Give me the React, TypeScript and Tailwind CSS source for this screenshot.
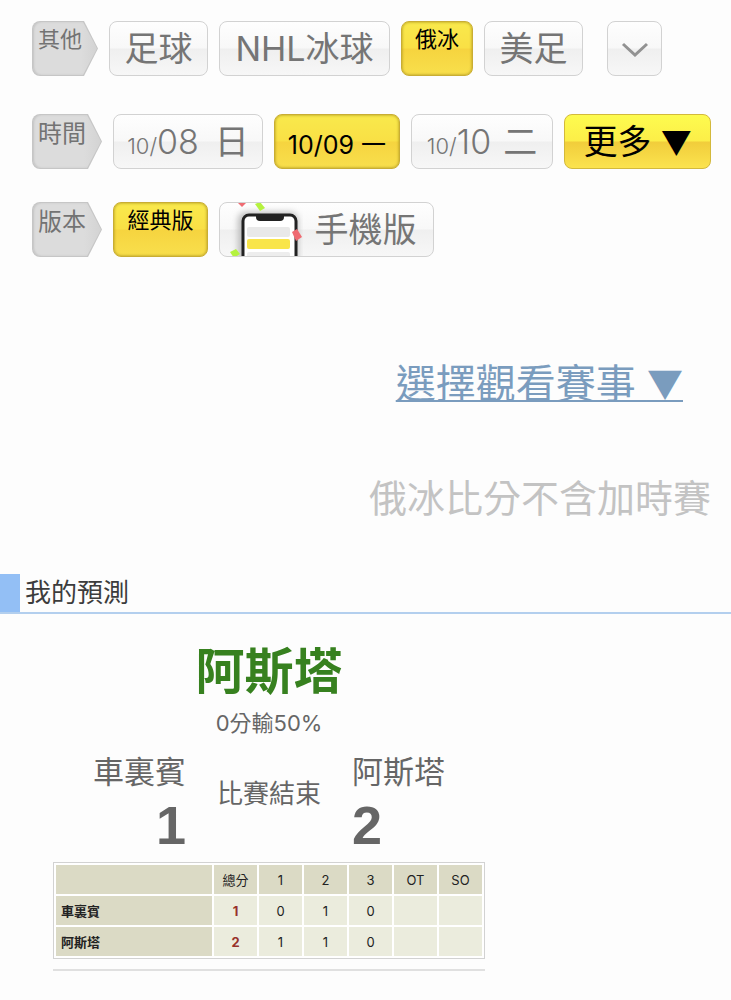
import React, { useState } from 'react';
import clsx from 'clsx';

const BUTTON_BASE =
  'flex h-[55px] shrink-0 justify-center overflow-hidden rounded-lg border';
const BUTTON_PLAIN =
  'items-center border-[#d2d2d2] bg-[linear-gradient(#fefefe,#f8f8f8_49%,#efefef_51%,#f7f7f7)] text-[34px] text-[#757575]';
const BUTTON_ACTIVE =
  'border-[#c9ad34] bg-[linear-gradient(#f9e94c,#f9e045_49%,#f6d43f_51%,#f8df4c)] text-black shadow-[inset_0_0_3px_#a8901c]';

const periods = ['1', '2', '3', 'OT', 'SO'];

const scores = [
  { team: '車裏賓', total: 1, periods: ['0', '1', '0', '', ''] },
  { team: '阿斯塔', total: 2, periods: ['1', '1', '0', '', ''] },
];

type TagProps = { label: string; className: string };

// Grey arrow-shaped label in front of each filter row
const Tag = ({ label, className }: TagProps) => (
  <div
    className={clsx(
      'h-[55px] shrink-0 rounded-l-lg bg-[#c6c6c6] p-px [clip-path:polygon(0_0,calc(100%-14px)_0,100%_50%,calc(100%-14px)_100%,0_100%)]',
      className,
    )}
  >
    <div className="h-full rounded-l-lg bg-[linear-gradient(90deg,#dcdcdc_75%,#d3d3d3)] pl-[5px] text-[#737373] shadow-[inset_1px_0_2px_#c4c4c4] [clip-path:polygon(0_0,calc(100%-14px)_0,100%_50%,calc(100%-14px)_100%,0_100%)]">
      {label}
    </div>
  </div>
);

type FilterButtonProps = {
  active?: boolean;
  className: string;
  onClick?: () => void;
  children: React.ReactNode;
};

const FilterButton = ({
  active,
  className,
  onClick,
  children,
}: FilterButtonProps) => (
  <button
    type="button"
    aria-pressed={active}
    onClick={onClick}
    className={clsx(
      BUTTON_BASE,
      active ? BUTTON_ACTIVE : BUTTON_PLAIN,
      className,
    )}
  >
    {children}
  </button>
);

const PhoneIcon = () => (
  <svg width="82" height="53" viewBox="0 0 82 53" aria-hidden="true">
    <defs>
      <filter id="phoneShadow" x="-20%" y="-20%" width="140%" height="140%">
        <feGaussianBlur stdDeviation="3" />
      </filter>
    </defs>
    <rect x="17" y="9" width="60" height="60" rx="8" fill="#bbb" filter="url(#phoneShadow)" />
    <rect x="22" y="12" width="53" height="70" rx="6" fill="#fff" stroke="#222" strokeWidth="3" />
    <path d="M35 11h28v3q0 4-4 4H39q-4 0-4-4z" fill="#222" />
    <rect x="26" y="24" width="43" height="10" rx="2" fill="#e9e9e9" />
    <rect x="26" y="36" width="43" height="10" rx="2" fill="#f9e54a" />
    <rect x="26" y="49" width="43" height="10" rx="2" fill="#ededed" />
    <path d="M17 0h8l-4 4z" fill="#ef6b72" />
    <path d="M34 1l5-2 5 6-5 3z" fill="#b5f23f" />
    <path d="M71 29l5-3 5 8-6 4z" fill="#ef6b72" />
    <path d="M9 49l6-3 4 5-6 4z" fill="#b5f23f" />
  </svg>
);

// Drop-down marker
const Marker = () => (
  <span className="font-['Noto_Sans_CJK_TC'] text-[0.9em]">▼</span>
);

const App = () => {
  const [sport, setSport] = useState('俄冰');
  const [date, setDate] = useState('10/09');

  return (
    <main className="min-h-screen overflow-hidden bg-[#fdfdfd] pt-[21px] font-['Inter','Noto_Sans_CJK_TC',sans-serif]">
      {/* Filters */}
      <div className="pl-8">
        <div className="flex gap-[11px]">
          <Tag label="其他" className="w-[66px] text-[22px] leading-[34px]" />
          <FilterButton className="w-[99px]" onClick={() => setSport('足球')}>
            足球
          </FilterButton>
          <FilterButton className="w-[171px]" onClick={() => setSport('NHL')}>
            NHL冰球
          </FilterButton>
          <FilterButton
            active={sport === '俄冰'}
            className="w-[72px] text-[22px] leading-[34px]"
            onClick={() => setSport('俄冰')}
          >
            俄冰
          </FilterButton>
          <FilterButton className="w-[99px]" onClick={() => setSport('美足')}>
            美足
          </FilterButton>
          <button
            type="button"
            aria-label="展開"
            className={clsx(BUTTON_BASE, BUTTON_PLAIN, 'ml-[13px] w-[55px]')}
          >
            <svg width="28" height="16" viewBox="0 0 28 16" fill="none" aria-hidden="true">
              <path d="M2 3l12 11L26 3" stroke="#929292" strokeWidth="3" />
            </svg>
          </button>
        </div>

        <div className="mt-[38px] flex gap-[11px]">
          <Tag label="時間" className="w-[70px] text-[24px] leading-[38px]" />
          <FilterButton className="w-[150px]" onClick={() => setDate('10/08')}>
            <span>
              <span className="font-light">
                <span className="text-[22px]">10/</span>08
              </span>
              <span className="ml-4">日</span>
            </span>
          </FilterButton>
          <FilterButton
            active={date === '10/09'}
            className="w-[126px] items-center pt-2 text-[25px]"
            onClick={() => setDate('10/09')}
          >
            10/09 一
          </FilterButton>
          <FilterButton className="w-[142px]" onClick={() => setDate('10/10')}>
            <span>
              <span className="font-light">
                <span className="text-[22px]">10/</span>10
              </span>
              <span className="ml-3">二</span>
            </span>
          </FilterButton>
          <button
            type="button"
            className={clsx(
              BUTTON_BASE,
              'w-[147px] items-center border-[#d3b93c] bg-[linear-gradient(#fdfb4f,#fcee48_49%,#f1cd3b_51%,#fbe34e)] text-[34px] text-black',
            )}
          >
            <span>
              更多 <Marker />
            </span>
          </button>
        </div>

        <div className="mt-[33px] flex gap-[11px]">
          <Tag label="版本" className="w-[70px] text-[24px] leading-[38px]" />
          <FilterButton active className="w-[95px] text-[22px] leading-[34px]">
            經典版
          </FilterButton>
          <FilterButton className="w-[215px] gap-3 pr-4">
            <PhoneIcon />
            手機版
          </FilterButton>
        </div>
      </div>

      <div className="mt-[97px] pr-12 text-right text-[40px] leading-[56px]">
        <a
          href="#games"
          className="text-[#7a9cbe] underline decoration-2 underline-offset-2 [text-decoration-skip-ink:none]"
        >
          選擇觀看賽事 <Marker />
        </a>
      </div>
      <p className="mt-[58px] pr-5 text-right text-[38px] leading-[56px] text-[#c3c3c3]">
        俄冰比分不含加時賽
      </p>

      {/* My predictions */}
      <h2 className="mt-12 border-b-2 border-[#b3cfee] text-[26px] leading-[38px] text-[#3c3c3c]">
        <span className="block border-l-[20px] border-[#93bff5] pl-[5px]">
          我的預測
        </span>
      </h2>

      <section id="games" className="ml-[53px] max-w-[432px] text-[#666]">
        <p className="pt-7 text-center text-[49px] leading-[60px] font-bold text-[#37811f]">
          阿斯塔
        </p>
        <p className="mt-1 text-center text-[22px] leading-[34px]">
          0分輸50%
        </p>

        <div className="mt-3 grid grid-cols-[1fr_auto_1fr] items-start gap-[31px]">
          <div className="text-right">
            <div className="text-[31px] leading-[40px]">車裏賓</div>
            <div className="font-['Liberation_Sans'] text-[54px] leading-[66px] font-bold">
              1
            </div>
          </div>
          <div className="mt-[23px] text-[26px] leading-[38px]">比賽結束</div>
          <div>
            <div className="text-[31px] leading-[40px]">阿斯塔</div>
            <div className="font-['Liberation_Sans'] text-[54px] leading-[66px] font-bold">
              2
            </div>
          </div>
        </div>

        <table className="mt-1 w-full table-fixed border-separate border-spacing-[2px] border border-[#d2d2d2] bg-white text-center text-[13px] leading-[18px] text-[#222]">
          <thead>
            <tr className="h-[29px] bg-[#dbdac5]">
              <th></th>
              <th className="w-[43px] font-normal">總分</th>
              {periods.map((period) => (
                <th key={period} className="w-[43px] font-normal">
                  {period}
                </th>
              ))}
            </tr>
          </thead>
          <tbody>
            {scores.map((row) => (
              <tr key={row.team} className="h-[29px] bg-[#ebecdd]">
                <th className="bg-[#dbdac5] pl-[5px] text-left font-bold">
                  {row.team}
                </th>
                <td className="font-bold text-[#98322b]">{row.total}</td>
                {row.periods.map((value, i) => (
                  <td key={i}>{value}</td>
                ))}
              </tr>
            ))}
          </tbody>
        </table>
        <hr className="mt-[10px] border-t-2 border-[#e0e0e0]" />
      </section>
    </main>
  );
};

export default App;
